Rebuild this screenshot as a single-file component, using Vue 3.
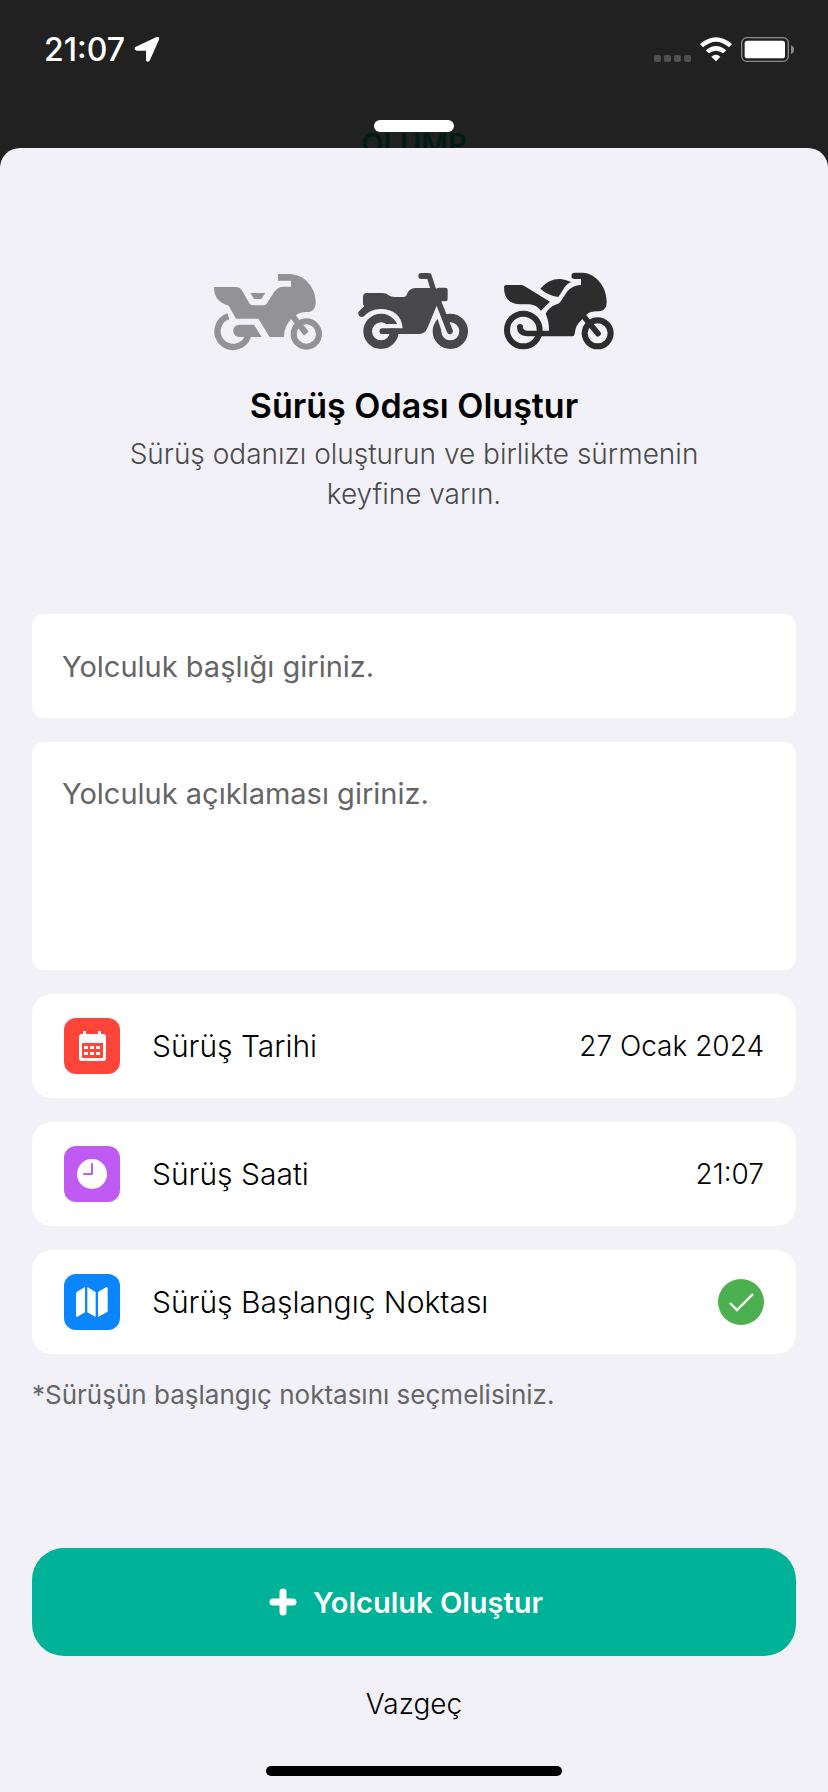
<script setup>
import { ref } from 'vue'

const title = ref('')
const description = ref('')
</script>

<template>
  <div class="screen">
    <header class="backdrop">
      <div class="status">
        <div class="clock">
          <span>21:07</span>
          <svg class="location" viewBox="402 110 78 81" aria-hidden="true">
            <path d="M408 142 L468 114 Q480 110 477 121 L450 182 Q447 188 442 187 Q438 186 438 181 V154 H411 Q404 153 404 148 Q404 144 408 142Z" fill="#fff" />
          </svg>
        </div>
        <div class="signals">
          <svg class="cell" viewBox="0 0 37 7" aria-hidden="true">
            <g fill="#505050">
              <rect x="0" width="7" height="7" rx="2" />
              <rect x="10" width="7" height="7" rx="2" />
              <rect x="20" width="7" height="7" rx="2" />
              <rect x="30" width="7" height="7" rx="2" />
            </g>
          </svg>
          <svg class="wifi" viewBox="857 111 96 75" aria-hidden="true">
            <g fill="#fff">
              <path d="M857 132 Q905 91 953 132 L944 142 Q905 108 866 142Z" />
              <path d="M874 151 Q905 125 936 151 L926 160 Q905 144 884 160Z" />
              <path d="M891 170 Q905 158 918 170 L905 184Z" />
            </g>
          </svg>
          <svg class="battery" viewBox="981 111 159 75" aria-hidden="true">
            <rect x="983" y="113" width="140" height="71" rx="15" fill="none" stroke="#8a8a8a" stroke-width="4" />
            <rect x="992" y="122" width="121" height="53" rx="8" fill="#fff" />
            <path d="M1131 136 Q1140 139 1140 149 Q1140 159 1131 162Z" fill="#8a8a8a" />
          </svg>
        </div>
      </div>
      <div class="brand" aria-hidden="true">OLUMP</div>
      <div class="handle"></div>
    </header>

    <main class="sheet">
      <section class="intro">
        <div class="bikes" aria-hidden="true">
          <svg class="bike" viewBox="24 36 330 240">
            <g fill="#939395">
              <path d="M27 81 H94 Q104 81 110 90 L133 130 Q137 136 143 136 H176 Q182 136 186 130 L207 97 Q218 80 234 80 H258 V62 H219 V42 H252 C300 42 332 84 332 125 C332 150 320 156 304 156 Q284 156 273 166 L258 178 Q237 200 237 231 H194 L160 176 H93 L71 137 Q27 126 27 81Z" />
              <path d="M136 99 H181 L169 117 H147Z" />
              <path d="M103 194 H147 L170 231 H103 A18 18 0 0 1 103 194Z" />
            </g>
            <g fill="none" stroke="#939395">
              <path d="M70 169 A47 47 0 1 0 129 229" stroke-width="19" />
              <circle cx="304" cy="222" r="38" stroke-width="18" />
              <path d="M264 170 L304 221" stroke-width="18" />
            </g>
          </svg>
          <svg class="bike" viewBox="24 36 330 240">
            <circle cx="93" cy="214" r="40" fill="none" stroke="#48484a" stroke-width="26" />
            <circle cx="301" cy="214" r="40" fill="none" stroke="#48484a" stroke-width="26" />
            <path d="M92 192 H160 V206 H92Z" fill="#f2f1f7" />
            <path d="M260 136 L286 216" stroke="#f2f1f7" stroke-width="20" />
            <path d="M39 111 Q39 99 51 99 H98 Q108 99 115 105 Q123 111 133 111 H160 Q168 111 170 105 Q177 84 196 84 H240 L232 57 H214 A9 9 0 0 1 214 39 H236 Q243 39 245 46 L258 86 Q264 83 268 83 H286 Q293 83 293 90 V117 Q293 124 286 124 H274 L308 210 A9 9 0 0 1 291 217 L260 137 L232 205 Q225 222 207 222 H97 A8 8 0 0 1 97 205 H158 C156 168 130 147 92 147 C70 147 54 156 43 168 Q35 174 28 168 Q22 161 27 154 Q34 147 43 138 Q39 136 39 130Z" fill="#48484a" />
          </svg>
          <svg class="bike wide" viewBox="24 36 336 240">
            <g fill="#2d2d2e">
              <path d="M27 82 Q27 75 34 75 H78 Q83 75 88 78 L165 125 L138 152 Q124 134 102 133 H76 Q27 132 27 82Z" />
              <path d="M136 86 Q160 56 196 57 Q212 58 228 66 Q218 70 210 80 L190 111 Q158 106 136 86Z" />
              <path d="M239 38 H262 C305 40 335 82 335 125 C335 149 322 154 306 154 Q286 154 274 164 L262 177 Q241 195 239 221 Q238 229 231 229 H96 Q66 227 66 201 A9 9 0 0 1 84 201 Q84 211 96 212 H162 Q162 182 152 161 Q162 141 181 134 Q191 133 196 126 L217 94 Q232 76 258 75 V57 H239 A9 9 0 0 1 239 38Z" />
            </g>
            <g fill="none" stroke="#2d2d2e">
              <circle cx="85" cy="210" r="49" stroke-width="18" />
              <circle cx="308" cy="220" r="39" stroke-width="18" />
              <path d="M265 168 L309 221" stroke-width="17" stroke-linecap="round" />
            </g>
          </svg>
        </div>
        <h1>Sürüş Odası Oluştur</h1>
        <p>Sürüş odanızı oluşturun ve birlikte sürmenin keyfine varın.</p>
      </section>

      <form class="form" @submit.prevent>
        <input v-model="title" class="field" type="text" aria-label="Yolculuk başlığı" placeholder="Yolculuk başlığı giriniz." />
        <textarea v-model="description" class="field area" aria-label="Yolculuk açıklaması" placeholder="Yolculuk açıklaması giriniz."></textarea>

        <button class="row" type="button">
          <span class="tile red">
            <svg viewBox="0 0 56 56" aria-hidden="true">
              <path d="M19 13h3v3h12v-3h3v3h2q3 0 3 3v21q0 3-3 3H18q-3 0-3-3V19q0-3 3-3h1z" fill="#fff" />
              <path d="M18 25h21v15H18z" fill="#ff453a" />
              <path d="M20 28h4v3h-4zM26 28h4v3h-4zM32 28h4v3h-4zM20 34h4v3h-4zM26 34h4v3h-4zM32 34h4v3h-4z" fill="#fff" />
            </svg>
          </span>
          <span class="label">Sürüş Tarihi</span>
          <span class="value">27 Ocak 2024</span>
        </button>

        <button class="row" type="button">
          <span class="tile purple">
            <svg viewBox="0 0 56 56" aria-hidden="true">
              <circle cx="28" cy="28" r="15" fill="#fff" />
              <path d="M28 18V28H20" fill="none" stroke="#bf5af2" stroke-width="2" stroke-linecap="round" stroke-linejoin="round" />
            </svg>
          </span>
          <span class="label">Sürüş Saati</span>
          <span class="value">21:07</span>
        </button>

        <button class="row" type="button">
          <span class="tile blue">
            <svg viewBox="0 0 168 168" aria-hidden="true">
              <path d="M36 59 Q36 55 39 53 L63 39 V115 L40 128 Q36 129 36 125Z M70 39 L95 54 V129 L70 115Z M102 54 L126 40 Q131 38 131 43 V110 Q131 113 128 115 L102 129Z" fill="#fff" />
            </svg>
          </span>
          <span class="label">Sürüş Başlangıç Noktası</span>
          <svg class="check" viewBox="0 0 46 46" aria-hidden="true">
            <circle cx="23" cy="23" r="23" fill="#4caf50" />
            <path d="M12 24L19 31L35 15" fill="none" stroke="#fff" stroke-width="2.4" />
          </svg>
        </button>

        <p class="note">*Sürüşün başlangıç noktasını seçmelisiniz.</p>

        <div class="actions">
          <button class="create" type="submit">
            <svg viewBox="0 0 28 28" aria-hidden="true">
              <path d="M14 4V24M4 14H24" stroke="#fff" stroke-width="7" stroke-linecap="round" />
            </svg>
            <span>Yolculuk Oluştur</span>
          </button>
          <button class="cancel" type="button">Vazgeç</button>
        </div>
      </form>
      <div class="home"></div>
    </main>
  </div>
</template>

<style>
body {
  margin: 0;
  background: #212121;
}
</style>

<style scoped>
.screen {
  display: flex;
  flex-direction: column;
  min-height: 100vh;
  background: #212121;
  color: #000;
  font-family: Inter, "Liberation Sans", sans-serif;
}

.screen * {
  box-sizing: border-box;
}

button,
input,
textarea {
  margin: 0;
  border: 0;
  color: inherit;
  font-family: inherit;
}

.backdrop {
  position: relative;
  display: flex;
  flex-direction: column;
  align-items: center;
  height: 148px;
  overflow: hidden;
}

.status {
  display: flex;
  align-items: center;
  justify-content: space-between;
  width: 100%;
  height: 98px;
  padding: 0 34px 0 44px;
}

.clock {
  display: flex;
  align-items: center;
  gap: 9px;
  color: #fff;
  font-size: 32px;
  font-weight: 500;
}

.location {
  width: 26px;
  height: 27px;
}

.signals {
  display: flex;
  align-items: flex-end;
  gap: 9px;
}

.cell {
  width: 37px;
  height: 7px;
}

.wifi {
  width: 32px;
  height: 25px;
}

.battery {
  width: 53px;
  height: 25px;
}

.brand {
  position: absolute;
  top: 124px;
  color: #001a14;
  font-size: 29px;
  font-weight: 600;
  line-height: 40px;
}

.handle {
  z-index: 1;
  width: 80px;
  height: 12px;
  margin-top: 22px;
  border-radius: 6px;
  background: #fff;
}

.sheet {
  display: flex;
  flex: 1;
  flex-direction: column;
  padding: 124px 32px 16px;
  border-radius: 20px 20px 0 0;
  background: #f2f1f7;
}

.intro {
  display: flex;
  flex-direction: column;
  align-items: center;
  text-align: center;
}

.bikes {
  display: flex;
  gap: 35px;
}

.bike {
  width: 110px;
  height: 80px;
}

.wide {
  width: 112px;
}

h1 {
  margin: 32px 0 0;
  font-size: 34px;
  font-weight: 600;
  line-height: 44px;
}

.intro p {
  max-width: 640px;
  margin: 6px 0 0;
  color: #4a4a4c;
  font-size: 28px;
  font-weight: 350;
  line-height: 40px;
}

.form {
  display: flex;
  flex: 1;
  flex-direction: column;
  gap: 24px;
  margin-top: 100px;
}

.field {
  display: block;
  width: 100%;
  height: 104px;
  padding: 0 30px;
  border-radius: 12px;
  background: #fff;
  font-size: 29px;
  line-height: 40px;
}

.field::placeholder {
  color: #656568;
  opacity: 1;
}

.area {
  height: 228px;
  padding: 32px 30px;
  resize: none;
}

.row {
  display: flex;
  align-items: center;
  width: 100%;
  height: 104px;
  padding: 0 32px;
  border-radius: 20px;
  background: #fff;
  text-align: left;
}

.tile {
  width: 56px;
  height: 56px;
  border-radius: 12px;
}

.tile svg {
  display: block;
  width: 100%;
  height: 100%;
}

.red {
  background: #ff453a;
}

.purple {
  background: #bf5af2;
}

.blue {
  background: #0a84ff;
}

.label {
  flex: 1;
  padding-left: 32px;
  font-size: 30px;
  font-weight: 350;
}

.value {
  font-size: 28px;
  font-weight: 350;
}

.check {
  width: 46px;
  height: 46px;
}

.note {
  margin: 0;
  color: #656568;
  font-size: 26px;
  line-height: 34px;
}

.actions {
  display: flex;
  flex-direction: column;
  align-items: center;
  margin-top: auto;
  padding-bottom: 30px;
}

.create {
  display: flex;
  align-items: center;
  justify-content: center;
  gap: 16px;
  width: 100%;
  height: 108px;
  padding: 0 16px 0 0;
  border-radius: 32px;
  background: #00b297;
  color: #fff;
  font-size: 29px;
  font-weight: 600;
}

.create svg {
  width: 28px;
  height: 28px;
}

.cancel {
  margin-top: 16px;
  padding: 12px 32px;
  background: none;
  font-size: 28px;
  font-weight: 350;
  line-height: 40px;
}

.home {
  align-self: center;
  width: 296px;
  height: 10px;
  border-radius: 5px;
  background: #000;
}
</style>
